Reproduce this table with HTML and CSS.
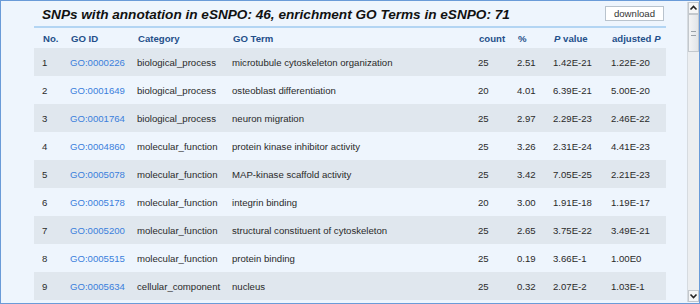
FILE: index.html
```html
<!DOCTYPE html>
<html>
<head>
<meta charset="utf-8">
<link rel="stylesheet" href="styles.css">
</head>
<body>
<div class="panel">
  <div class="content">
    <div class="titlebar">
      <h1 class="title">SNPs with annotation in eSNPO: 46, enrichment GO Terms in eSNPO: 71</h1>
      <button class="dl">download</button>
    </div>
    <table class="go">
      <colgroup>
        <col class="c1"><col class="c2"><col class="c3"><col class="c4"><col class="c5"><col class="c6"><col class="c7"><col class="c8">
      </colgroup>
      <thead>
        <tr><th>No.</th><th>GO ID</th><th>Category</th><th>GO Term</th><th>count</th><th>%</th><th><i>P</i> value</th><th>adjusted <i>P</i></th></tr>
      </thead>
      <tbody>
        <tr><td>1</td><td><a href="#">GO:0000226</a></td><td>biological_process</td><td>microtubule cytoskeleton organization</td><td>25</td><td>2.51</td><td>1.42E-21</td><td>1.22E-20</td></tr>
        <tr><td>2</td><td><a href="#">GO:0001649</a></td><td>biological_process</td><td>osteoblast differentiation</td><td>20</td><td>4.01</td><td>6.39E-21</td><td>5.00E-20</td></tr>
        <tr><td>3</td><td><a href="#">GO:0001764</a></td><td>biological_process</td><td>neuron migration</td><td>25</td><td>2.97</td><td>2.29E-23</td><td>2.46E-22</td></tr>
        <tr><td>4</td><td><a href="#">GO:0004860</a></td><td>molecular_function</td><td>protein kinase inhibitor activity</td><td>25</td><td>3.26</td><td>2.31E-24</td><td>4.41E-23</td></tr>
        <tr><td>5</td><td><a href="#">GO:0005078</a></td><td>molecular_function</td><td>MAP-kinase scaffold activity</td><td>25</td><td>3.42</td><td>7.05E-25</td><td>2.21E-23</td></tr>
        <tr><td>6</td><td><a href="#">GO:0005178</a></td><td>molecular_function</td><td>integrin binding</td><td>20</td><td>3.00</td><td>1.91E-18</td><td>1.19E-17</td></tr>
        <tr><td>7</td><td><a href="#">GO:0005200</a></td><td>molecular_function</td><td>structural constituent of cytoskeleton</td><td>25</td><td>2.65</td><td>3.75E-22</td><td>3.49E-21</td></tr>
        <tr><td>8</td><td><a href="#">GO:0005515</a></td><td>molecular_function</td><td>protein binding</td><td>25</td><td>0.19</td><td>3.66E-1</td><td>1.00E0</td></tr>
        <tr><td>9</td><td><a href="#">GO:0005634</a></td><td>cellular_component</td><td>nucleus</td><td>25</td><td>0.32</td><td>2.07E-2</td><td>1.03E-1</td></tr>
      </tbody>
    </table>
  </div>
  <div class="scrollbar">
    <div class="sb-btn">
      <svg width="9" height="6" viewBox="0 0 9 6"><path d="M1.5 4.5 L4.5 1.5 L7.5 4.5" fill="none" stroke="#222" stroke-width="1.6"/></svg>
    </div>
    <div class="sb-thumb">
      <span class="grip"></span>
    </div>
    <div class="sb-track"></div>
    <div class="sb-btn">
      <svg width="9" height="6" viewBox="0 0 9 6"><path d="M1.5 1.5 L4.5 4.5 L7.5 1.5" fill="none" stroke="#222" stroke-width="1.6"/></svg>
    </div>
  </div>
</div>
</body>
</html>
```
FILE: styles.css
```css
html, body {
  margin: 0;
  padding: 0;
  background: #ffffff;
}
.panel {
  width: 700px;
  height: 304px;
  box-sizing: border-box;
  border: 1px solid #6a9bd8;
  background: #eef5fd;
  display: flex;
  overflow: hidden;
  font-family: "Liberation Sans", Arial, sans-serif;
}
.content {
  flex: 1;
  padding-left: 33px;
  overflow: hidden;
}
.titlebar {
  width: 632px;
  height: 25px;
  display: flex;
  align-items: center;
  justify-content: space-between;
  border-bottom: 2px solid #b3d5f3;
}
.title {
  margin: 2px 0 0 8px;
  font-size: 13.6px;
  font-weight: bold;
  font-style: italic;
  color: #111;
  line-height: 16px;
}
.dl {
  margin-right: 2px;
  width: 59px;
  height: 15px;
  padding: 0;
  background: #ffffff;
  border: 1px solid #b9c3cd;
  border-radius: 0;
  font-family: "Liberation Sans", Arial, sans-serif;
  font-size: 9.6px;
  color: #333;
  line-height: 13px;
}
.go {
  width: 632px;
  table-layout: fixed;
  border-collapse: collapse;
  font-size: 9.6px;
  color: #2a2a2a;
}
.c1 { width: 28px; }
.c2 { width: 67px; }
.c3 { width: 95px; }
.c4 { width: 246px; }
.c5 { width: 39px; }
.c6 { width: 36px; }
.c7 { width: 58px; }
.c8 { width: 63px; }
.go th {
  height: 20px;
  padding: 0 0 0 9px;
  text-align: left;
  font-weight: bold;
  color: #244f8a;
  white-space: nowrap;
}
.go td {
  height: 28px;
  padding: 0 0 0 8px;
  white-space: nowrap;
}
.go tbody tr:nth-child(odd) {
  background: #e0e7ee;
}
.go a {
  color: #3b7fdc;
  text-decoration: none;
}
.scrollbar {
  width: 11px;
  margin: 1px 0 1px 0;
  display: flex;
  flex-direction: column;
  background: #eceef0;
  border-left: 1px solid #d6dbe0;
}
.sb-btn {
  height: 12px;
  display: flex;
  align-items: center;
  justify-content: center;
  background: #f4f5f6;
  border: 1px solid #c3c8cd;
  box-sizing: border-box;
}
.sb-thumb {
  height: 38px;
  box-sizing: border-box;
  border: 1px solid #c3c8cd;
  background: linear-gradient(to right, #f3f4f5, #e2e5e8);
  display: flex;
  align-items: center;
  justify-content: center;
}
.grip {
  width: 5px;
  height: 5px;
  border-top: 1px solid #9aa1a8;
  border-bottom: 1px solid #9aa1a8;
  box-sizing: border-box;
  position: relative;
}
.sb-track {
  flex: 1;
}
```
